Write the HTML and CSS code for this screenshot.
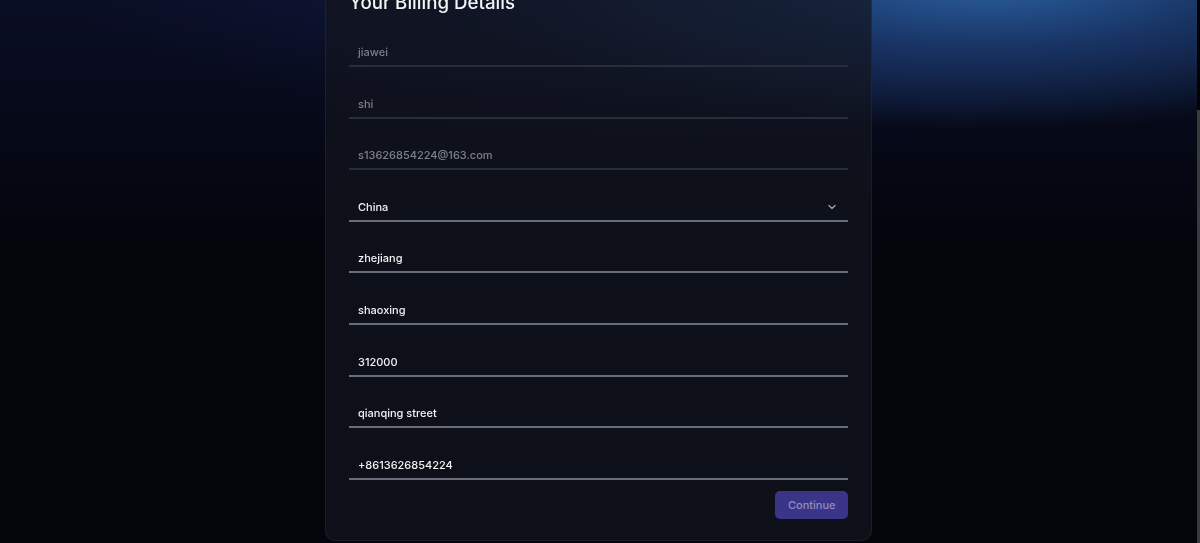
FILE: index.html
```html
<!DOCTYPE html>
<html lang="en">
<head>
<meta charset="utf-8">
<title>Billing Details</title>
<link rel="stylesheet" href="styles.css">
</head>
<body>
<main class="page">
  <form class="card" onsubmit="return false">
    <h2 class="card-title">Your Billing Details</h2>
    <div class="fields">
      <input class="field" type="text" placeholder="jiawei">
      <input class="field" type="text" placeholder="shi">
      <input class="field" type="email" placeholder="s13626854224@163.com">
      <div class="select-wrap">
        <select class="field filled select">
          <option>China</option>
        </select>
        <svg class="chevron" width="10" height="10" viewBox="0 0 10 10" aria-hidden="true"><polyline points="2,3.5 5,6.5 8,3.5" fill="none" stroke="#a1a6b0" stroke-width="1.3" stroke-linecap="round" stroke-linejoin="round"/></svg>
      </div>
      <input class="field filled" type="text" value="zhejiang">
      <input class="field filled" type="text" value="shaoxing">
      <input class="field filled" type="text" value="312000">
      <input class="field filled" type="text" value="qianqing street">
      <input class="field filled" type="tel" value="+8613626854224">
    </div>
    <div class="actions">
      <button class="btn" type="submit">Continue</button>
    </div>
  </form>
</main>
<div class="scrollbar" aria-hidden="true"><div class="scrollbar-thumb"></div></div>
<script src="script.js"></script>
</body>
</html>
```

FILE: styles.css
```css
* { box-sizing: border-box; }

html {
  background-color: #03050b;
  background-image:
    radial-gradient(ellipse 540px 150px at 990px -20px, rgba(44, 100, 165, 0.95) 0%, rgba(32, 74, 135, 0.6) 45%, rgba(10, 20, 50, 0) 100%),
    radial-gradient(ellipse 700px 160px at 760px -20px, rgba(26, 40, 100, 0.5) 0%, rgba(10, 14, 40, 0) 100%),
    linear-gradient(to bottom, #0a0e24 0px, #060918 120px, #03050b 260px);
  background-attachment: fixed;
  background-repeat: no-repeat;
  scrollbar-width: none;
}

html::-webkit-scrollbar { width: 0; }

body {
  margin: 0;
  padding-right: 3px;
  font-family: Inter, "Noto Sans", sans-serif;
  color: #e6e7ea;
}

.page {
  display: flex;
  justify-content: center;
  padding: 98px 0 2px;
}

.card {
  width: 547px;
  padding: 24px 23px 21px;
  background: rgba(19, 22, 30, 0.7);
  border: 1px solid rgba(255, 255, 255, 0.06);
  border-radius: 10px;
  backdrop-filter: blur(12px);
}

.card-title {
  margin: 0 0 11px;
  font-size: 18.7px;
  line-height: 27px;
  font-weight: 500;
  color: #f3f4f6;
}

.fields {
  display: flex;
  flex-direction: column;
  gap: 11.6px;
}

.field {
  display: block;
  width: 100%;
  height: 40px;
  margin: 0;
  padding: 12px 9px 0;
  border: 0;
  border-bottom: 2px solid #272d3b;
  border-radius: 0;
  background: transparent;
  font-family: inherit;
  font-size: 11px;
  font-weight: 500;
  color: #f1f2f4;
  outline: none;
}

.field::placeholder { color: #7c818c; font-weight: 500; }

.field.filled { border-bottom-color: #676d79; }

.select-wrap { position: relative; }

.select {
  appearance: none;
  -webkit-appearance: none;
  padding-top: 12px;
}

.chevron {
  position: absolute;
  right: 11px;
  top: 20px;
  pointer-events: none;
}

.actions {
  display: flex;
  justify-content: flex-end;
  margin-top: 11px;
}

.btn {
  height: 28px;
  padding: 0 12.5px;
  border: 0;
  border-radius: 5px;
  background: #3b3589;
  color: #908cbc;
  font-family: inherit;
  font-size: 11px;
  font-weight: 500;
  cursor: pointer;
}

.scrollbar {
  position: fixed;
  top: 0;
  right: 0;
  bottom: 0;
  width: 3px;
  background: #030303;
}

.scrollbar-thumb {
  position: absolute;
  top: 110px;
  left: 0;
  right: 0;
  bottom: 0;
  background: #3a3a3d;
}
```

FILE: script.js
```js
window.scrollTo(0, document.documentElement.scrollHeight);
```
